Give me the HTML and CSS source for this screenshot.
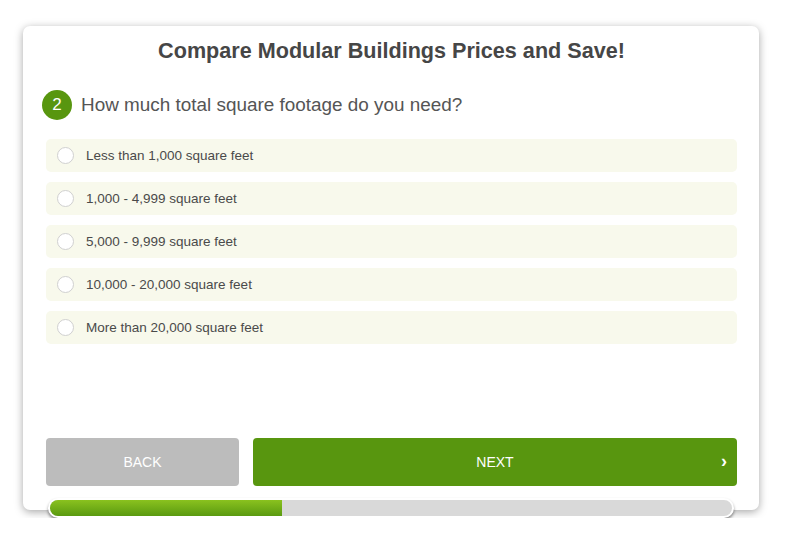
FILE: index.html
```html
<!DOCTYPE html>
<html>
<head>
<meta charset="utf-8">
<link rel="stylesheet" href="styles.css">
</head>
<body>
<div class="wrap">
  <div class="card">
    <h1 class="title">Compare Modular Buildings Prices and Save!</h1>
    <div class="question">
      <span class="badge">2</span>
      <span class="qtext">How much total square footage do you need?</span>
    </div>
    <div class="options">
      <label class="option"><span class="radio"></span><span>Less than 1,000 square feet</span></label>
      <label class="option"><span class="radio"></span><span>1,000 - 4,999 square feet</span></label>
      <label class="option"><span class="radio"></span><span>5,000 - 9,999 square feet</span></label>
      <label class="option"><span class="radio"></span><span>10,000 - 20,000 square feet</span></label>
      <label class="option"><span class="radio"></span><span>More than 20,000 square feet</span></label>
    </div>
    <div class="buttons">
      <div class="btn back">BACK</div>
      <div class="btn next">NEXT<span class="chev">›</span></div>
    </div>
  </div>
  <div class="progress"><div class="fill" style="width:34%"></div></div>
</div>
</body>
</html>
```
FILE: styles.css
```css
* { box-sizing: border-box; }
html, body { margin: 0; padding: 0; background: #fff; }
body { font-family: "Liberation Sans", Arial, sans-serif; color: #444; }
.wrap { padding: 26px 0 0 23px; width: 759px; }
.card {
  width: 736px;
  height: 484px;
  background: #fff;
  border-radius: 7px;
  box-shadow: 0 2px 8px rgba(0,0,0,0.35);
  padding: 13px 22px 0 23px;
}
.title {
  margin: 0;
  font-size: 21.6px;
  font-weight: bold;
  text-align: center;
  color: #464646;
  line-height: 24px;
}
.question {
  display: flex;
  align-items: center;
  margin-top: 27px;
  margin-left: -4px;
  height: 30px;
}
.badge {
  width: 30px; height: 30px;
  border-radius: 50%;
  background: #58960f;
  color: #fff;
  font-size: 17px;
  display: flex; align-items: center; justify-content: center;
}
.qtext { margin-left: 9px; font-size: 18.9px; color: #555; }
.options { margin-top: 19px; display: flex; flex-direction: column; gap: 10px; }
.option {
  display: flex; align-items: center;
  height: 33px;
  background: #f8f9ec;
  border-radius: 5px;
  padding-left: 11px;
  font-size: 13.5px;
  color: #4a4a4a;
}
.radio {
  width: 17px; height: 17px;
  border-radius: 50%;
  border: 1px solid #d0d0d0;
  background: #fff;
  margin-right: 12px;
}
.buttons { display: flex; gap: 14px; margin-top: 94px; }
.btn {
  height: 48px;
  border-radius: 4px;
  color: #fff;
  font-size: 14px;
  display: flex; align-items: center; justify-content: center;
  position: relative;
}
.back { width: 193px; background: #bcbcbc; }
.next { flex: 1; background: #58960f; }
.chev { position: absolute; right: 10px; top: 13px; font-size: 18px; font-weight: bold; }
.progress {
  margin: -12px 0 0 25px;
  width: 686px;
  height: 20px;
  border-radius: 10px;
  background: #d9d9d9;
  border: 2px solid #fff;
  box-shadow: 0 2px 3px rgba(0,0,0,0.45);
  overflow: hidden;
  position: relative;
}
.fill {
  height: 100%;
  background: linear-gradient(#8ac21f, #5a9a10);
}
```
